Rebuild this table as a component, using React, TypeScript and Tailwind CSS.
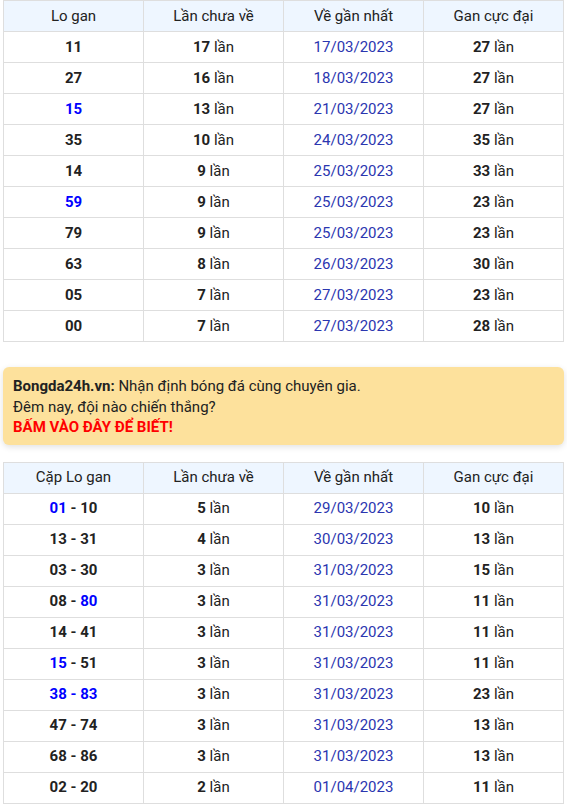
import React from "react";

type Row = { a: React.ReactNode; n: number; date: string; max: number };

const B = ({ children }: { children: React.ReactNode }) => <span className="text-[#0000ff]">{children}</span>;

const lo: Row[] = [
  { a: "11", n: 17, date: "17/03/2023", max: 27 },
  { a: "27", n: 16, date: "18/03/2023", max: 27 },
  { a: <B>15</B>, n: 13, date: "21/03/2023", max: 27 },
  { a: "35", n: 10, date: "24/03/2023", max: 35 },
  { a: "14", n: 9, date: "25/03/2023", max: 33 },
  { a: <B>59</B>, n: 9, date: "25/03/2023", max: 23 },
  { a: "79", n: 9, date: "25/03/2023", max: 23 },
  { a: "63", n: 8, date: "26/03/2023", max: 30 },
  { a: "05", n: 7, date: "27/03/2023", max: 23 },
  { a: "00", n: 7, date: "27/03/2023", max: 28 },
];

const cap: Row[] = [
  { a: <><B>01</B> - 10</>, n: 5, date: "29/03/2023", max: 10 },
  { a: "13 - 31", n: 4, date: "30/03/2023", max: 13 },
  { a: "03 - 30", n: 3, date: "31/03/2023", max: 15 },
  { a: <>08 - <B>80</B></>, n: 3, date: "31/03/2023", max: 11 },
  { a: "14 - 41", n: 3, date: "31/03/2023", max: 11 },
  { a: <><B>15</B> - 51</>, n: 3, date: "31/03/2023", max: 11 },
  { a: <B>38 - 83</B>, n: 3, date: "31/03/2023", max: 23 },
  { a: "47 - 74", n: 3, date: "31/03/2023", max: 13 },
  { a: "68 - 86", n: 3, date: "31/03/2023", max: 13 },
  { a: "02 - 20", n: 2, date: "01/04/2023", max: 11 },
];

const Table = ({ first, rows }: { first: string; rows: Row[] }) => (
  <table className="w-full table-fixed border-collapse text-[15px] text-[#222]">
    <thead>
      <tr className="bg-[#eef6ff] h-[31px]">
        {[first, "Lần chưa về", "Về gần nhất", "Gan cực đại"].map((h) => (
          <th key={h} className="border border-[#dedede] font-normal text-center">
            {h}
          </th>
        ))}
      </tr>
    </thead>
    <tbody>
      {rows.map((r, i) => (
        <tr key={i} className="h-[31px]">
          <td className="border border-[#dedede] text-center font-bold">{r.a}</td>
          <td className="border border-[#dedede] text-center">
            <b>{r.n}</b> lần
          </td>
          <td className="border border-[#dedede] text-center text-[#2b36b0]">{r.date}</td>
          <td className="border border-[#dedede] text-center">
            <b>{r.max}</b> lần
          </td>
        </tr>
      ))}
    </tbody>
  </table>
);

export default function App() {
  return (
    <div className="w-[567px] px-[3px] bg-white" style={{ fontFamily: "Roboto, 'Liberation Sans', sans-serif" }}>
      <Table first="Lo gan" rows={lo} />
      {/* banner */}
      <div className="mt-[25px] mb-[17px] rounded-md bg-[#fde19c] px-[10px] pt-[9px] pb-[7px] text-[15px] leading-[20.5px] text-[#222] shadow-[0_2px_6px_rgba(0,0,0,0.12)]">
        <div>
          <b>Bongda24h.vn:</b> Nhận định bóng đá cùng chuyên gia.
        </div>
        <div>Đêm nay, đội nào chiến thắng?</div>
        <div className="font-bold text-[#ff0000]">BẤM VÀO ĐÂY ĐỂ BIẾT!</div>
      </div>
      <Table first="Cặp Lo gan" rows={cap} />
    </div>
  );
}
